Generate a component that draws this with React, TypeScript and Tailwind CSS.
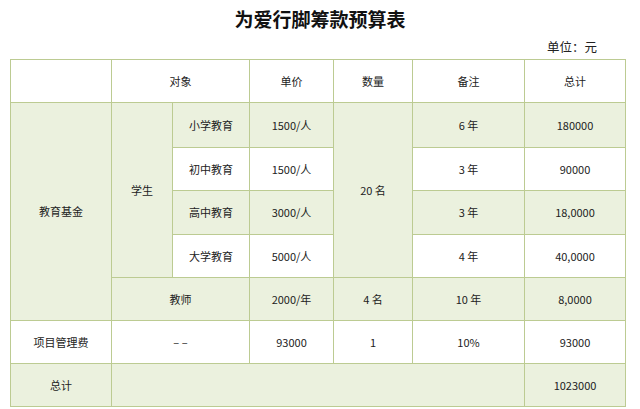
import React from "react";

const G = "bg-[#ebf1de]";
const W = "bg-white";
const cell = "border border-[#bccb92] text-center align-middle p-0";

export default function App() {
  return (
    <div
      className="w-[640px] h-[409px] bg-white text-[#222] overflow-hidden"
      style={{ fontFamily: '"Noto Sans CJK SC", "Noto Sans", sans-serif' }}
    >
      <div className="h-[37px] flex items-center justify-center pl-[0px]">
        <h1 className="text-[19px] font-bold text-[#111] leading-none tracking-[0px]">
          为爱行脚筹款预算表
        </h1>
      </div>
      <div className="h-[22px] flex items-start justify-end pr-[43px]">
        <span className="text-[12.5px] leading-[22px] -mt-[1px]">单位：元</span>
      </div>
      <div className="pl-[10px]">
        <table className="border-collapse table-fixed w-[615px] text-[11px] leading-none border border-[#b3c387]">
          <colgroup>
            <col className="w-[101px]" />
            <col className="w-[61px]" />
            <col className="w-[77px]" />
            <col className="w-[84px]" />
            <col className="w-[79px]" />
            <col className="w-[112px]" />
            <col className="w-[101px]" />
          </colgroup>
          <tbody>
            <tr className="h-[43px]">
              <td className={`${cell} ${W}`}></td>
              <td className={`${cell} ${W}`} colSpan={2}>对象</td>
              <td className={`${cell} ${W}`}>单价</td>
              <td className={`${cell} ${W}`}>数量</td>
              <td className={`${cell} ${W}`}>备注</td>
              <td className={`${cell} ${W}`}>总计</td>
            </tr>
            <tr className="h-[45px]">
              <td className={`${cell} ${G}`} rowSpan={5}>教育基金</td>
              <td className={`${cell} ${G}`} rowSpan={4}>学生</td>
              <td className={`${cell} ${G}`}>小学教育</td>
              <td className={`${cell} ${G}`}>1500/人</td>
              <td className={`${cell} ${G}`} rowSpan={4}>20 名</td>
              <td className={`${cell} ${G}`}>6 年</td>
              <td className={`${cell} ${G}`}>180000</td>
            </tr>
            <tr className="h-[43px]">
              <td className={`${cell} ${W}`}>初中教育</td>
              <td className={`${cell} ${W}`}>1500/人</td>
              <td className={`${cell} ${W}`}>3 年</td>
              <td className={`${cell} ${W}`}>90000</td>
            </tr>
            <tr className="h-[44px]">
              <td className={`${cell} ${G}`}>高中教育</td>
              <td className={`${cell} ${G}`}>3000/人</td>
              <td className={`${cell} ${G}`}>3 年</td>
              <td className={`${cell} ${G}`}>18,0000</td>
            </tr>
            <tr className="h-[43px]">
              <td className={`${cell} ${W}`}>大学教育</td>
              <td className={`${cell} ${W}`}>5000/人</td>
              <td className={`${cell} ${W}`}>4 年</td>
              <td className={`${cell} ${W}`}>40,0000</td>
            </tr>
            <tr className="h-[43px]">
              <td className={`${cell} ${G}`} colSpan={2}>教师</td>
              <td className={`${cell} ${G}`}>2000/年</td>
              <td className={`${cell} ${G}`}>4 名</td>
              <td className={`${cell} ${G}`}>10 年</td>
              <td className={`${cell} ${G}`}>8,0000</td>
            </tr>
            <tr className="h-[43px]">
              <td className={`${cell} ${W}`}>项目管理费</td>
              <td className={`${cell} ${W}`} colSpan={2}>– –</td>
              <td className={`${cell} ${W}`}>93000</td>
              <td className={`${cell} ${W}`}>1</td>
              <td className={`${cell} ${W}`}>10%</td>
              <td className={`${cell} ${W}`}>93000</td>
            </tr>
            <tr className="h-[43px]">
              <td className={`${cell} ${G}`}>总计</td>
              <td className={`${cell} ${G}`} colSpan={5}></td>
              <td className={`${cell} ${G}`}>1023000</td>
            </tr>
          </tbody>
        </table>
      </div>
    </div>
  );
}
